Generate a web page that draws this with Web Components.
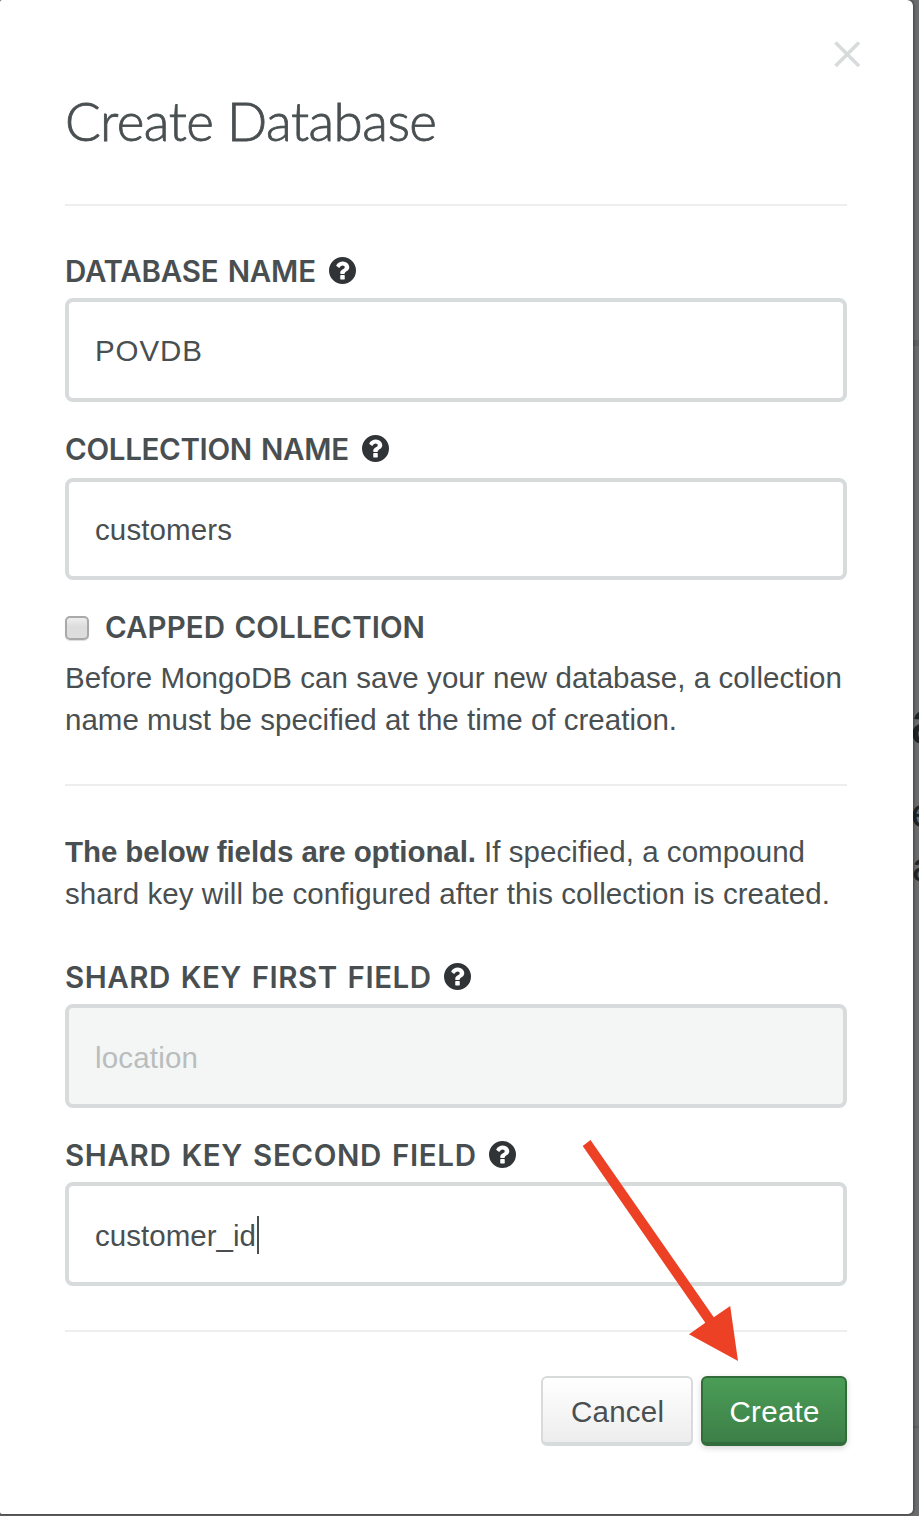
<!DOCTYPE html>
<html lang="en">
<head>
<meta charset="utf-8">
<title>Create Database</title>
<style>
html,body{margin:0;height:1516px;overflow:hidden;background:#fff}
body{font-family:"Liberation Sans",Arial,sans-serif;font-size:29.5px;color:#494f51}
</style>
</head>
<body>
<modal-stage></modal-stage>
<script>
function define(name, html, ready) {
  const t = document.createElement('template');
  t.innerHTML = html;
  customElements.define(name, class extends HTMLElement {
    constructor() {
      super();
      this.attachShadow({mode: 'open'}).appendChild(t.content.cloneNode(true));
    }
    connectedCallback() { if (ready) ready(this, this.shadowRoot); }
  });
}

// A single line of text whose tracking is adjusted to a given measure.
define('text-line', `<style>:host{display:inline-block;white-space:nowrap}</style><span><slot></slot></span>`, (el, root) => {
  const span = root.querySelector('span'), w = +el.getAttribute('measure');
  span.style.letterSpacing = '0px';
  const n = el.textContent.length;
  const now = span.getBoundingClientRect().width;
  if (w && now) span.style.letterSpacing = ((w - now) / (n - 1)).toFixed(3) + 'px';
  el.style.width = w + 'px';
});

define('help-icon', `<style>:host{display:block;width:27px;height:27px}svg{display:block}</style>
<svg width="27" height="27" viewBox="128 128 1536 1536" fill="#303436"><path fill-rule="evenodd" d="M896 128a768 768 0 1 0 0 1536a768 768 0 1 0 0-1536zM1024 1376v-192q0-14-9-23t-23-9h-192q-14 0-23 9t-9 23v192q0 14 9 23t23 9h192q14 0 23-9t9-23zM1280 704q0-88-55.500-163t-138.500-116-170-41q-243 0-371 213-15 24 8 42l132 100q7 6 19 6 16 0 25-12 53-68 86-92 34-24 86-24 48 0 85.500 26t37.500 59q0 38-20 61t-68 45q-63 28-115.500 86.500t-52.500 125.500v36q0 14 9 23t23 9h192q14 0 23-9t9-23q0-19 21.500-49.500t54.500-49.500q32-18 49-28.500t46-35 44.500-48 28-60.500 12.500-81z" /></svg>`);

define('rule-line', `<style>:host{display:block;height:2px;background:#edeeee}</style>`);

define('form-field', `<style>
:host{display:block}
.label{display:flex;align-items:center;height:40px;gap:12px;font:600 29.5px/40px Inter,sans-serif;word-spacing:2px}
.label help-icon{margin:-1px 0 0 .5px}
.box{box-sizing:border-box;height:var(--h,104px);margin-top:var(--gap,7px);border:4px solid #d7dbdb;border-radius:8px;padding:var(--drop,2px) 0 0 26px;display:flex;align-items:center;line-height:40px}
:host([disabled]) .box{background:#f4f6f5;color:#b9bdbd}
</style>
<div class="label"><slot name="label"></slot><help-icon></help-icon></div>
<div class="box"><slot></slot></div>`);

define('text-caret', `<style>:host{display:block;width:2px;height:38px;background:#494f51;margin:-2px 0 0 1px}</style>`);

define('check-box', `<style>
:host{display:flex;height:40px;align-items:center;gap:16px;font:600 29.5px/40px Inter,sans-serif;word-spacing:2px}
i{box-sizing:border-box;width:24px;height:24px;margin-top:2px;border:2px solid #a9a9a9;border-radius:5px;background:linear-gradient(#eee,#dcdcdc 45%,#dedede);box-shadow:0 1px 1px #ddd}
</style><i></i><slot></slot>`);

define('push-button', `<style>
:host{box-sizing:border-box;display:flex;height:70px;width:152px;justify-content:center;border:2px solid #d7dbdb;border-bottom-width:4px;border-radius:6px;background:linear-gradient(#fff,#ededee);line-height:40px;padding:14px 0 0 1px}
:host([primary]){width:146px;color:#fff;background:linear-gradient(#4a9d56,#3d7f48);border-color:#316c3a;box-shadow:0 2px 6px rgba(0,0,0,.16)}
</style><slot></slot>`);

define('close-icon', `<style>:host{display:block}svg{display:block}</style>
<svg width="27" height="27" viewBox="0 0 27 27" stroke="#d8dbdb" stroke-width="3.600" fill="none"><path d="M1.500 1.500L25 25M25 1.500L1.500 25"/></svg>`);

define('pointer-arrow', `<style>:host{display:block}svg{display:block}</style>
<svg width="160" height="224" viewBox="580 1138 160 224"><path fill="#ed4126" d="M582.700 1146L590.500 1140L713.800 1317.200L730.200 1306L738 1361L689 1334.300L705.300 1322.800Z"/></svg>`);

define('page-behind', `<style>
:host{display:block;width:919px;height:1516px;background:#6b6c6d;overflow:hidden;position:relative;color:#1e2324}
span{position:absolute;left:912px;line-height:1}
.line{position:absolute;left:913px;width:6px;height:6px;background:#606162}
</style>
<span style="font-size:61px;top:692px;left:910px">a</span><span style="font-size:41px;top:793px;left:911px">e</span><span style="font-size:41px;top:847px">a</span>
<div class="line" style="top:340px"></div><div class="line" style="top:1426px;height:2px"></div>`);

define('create-dialog', `<style>
:host{display:block;box-sizing:border-box;width:913px;height:1514px;background:#fff;border-radius:2px 6px 5px 2px;padding:0 66px 0 65px;box-shadow:0 0 3px 1px rgba(0,0,0,.4);position:relative}
close-icon{position:absolute;left:834px;top:41px}
pointer-arrow{position:absolute;left:580px;top:1138px}
h1{margin:0;padding:91px 0 53px;height:60px;font:300 53px/60px Lato,Inter,sans-serif;-webkit-text-stroke:.8px #494f51}
p{margin:0;line-height:42px;height:84px}
p text-line{display:block}
.mixed{display:flex;gap:8px}
.actions{display:flex;justify-content:flex-end;gap:8px;margin-top:44px}
</style>
<close-icon></close-icon>
<h1><text-line measure="372">Create Database</text-line></h1>
<rule-line></rule-line>
<form-field style="margin-top:45px"><text-line slot="label" measure="251">DATABASE NAME</text-line><text-line measure="107">POVDB</text-line></form-field>
<form-field style="margin-top:27px;--gap:9px;--h:102px"><text-line slot="label" measure="284">COLLECTION NAME</text-line><text-line measure="137">customers</text-line></form-field>
<check-box style="margin-top:27px"><text-line measure="320">CAPPED COLLECTION</text-line></check-box>
<p style="margin-top:10px"><text-line measure="777">Before MongoDB can save your new database, a collection</text-line><text-line measure="612">name must be specified at the time of creation.</text-line></p>
<rule-line style="margin-top:43px"></rule-line>
<p style="margin-top:45px"><span class="mixed"><b><text-line measure="411">The below fields are optional.</text-line></b><text-line measure="321">If specified, a compound</text-line></span><text-line measure="765">shard key will be configured after this collection is created.</text-line></p>
<form-field disabled style="margin-top:42px;--drop:4px"><text-line slot="label" measure="366">SHARD KEY FIRST FIELD</text-line><text-line measure="103">location</text-line></form-field>
<form-field style="margin-top:27px;--drop:4px"><text-line slot="label" measure="411">SHARD KEY SECOND FIELD</text-line><text-line measure="161">customer_id</text-line><text-caret></text-caret></form-field>
<rule-line style="margin-top:44px"></rule-line>
<div class="actions"><push-button><text-line measure="93">Cancel</text-line></push-button><push-button primary><text-line measure="90">Create</text-line></push-button></div>
<pointer-arrow></pointer-arrow>`);

define('modal-stage', `<style>
:host{display:grid;width:919px;height:1516px;overflow:hidden}
page-behind,create-dialog{grid-area:1/1}
</style><page-behind></page-behind><create-dialog></create-dialog>`);
</script>
</body>
</html>
